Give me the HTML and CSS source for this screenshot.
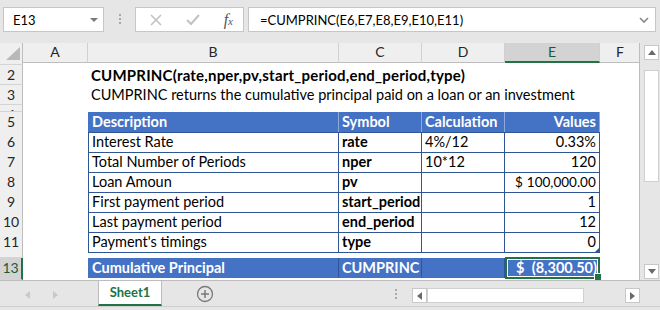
FILE: index.html
```html
<!DOCTYPE html>
<html lang="en">
<head>
  <meta charset="UTF-8" />
  <title>CUMPRINC - Sheet1</title>
  <link rel="stylesheet" href="styles.css">
</head>
<body>
  <div class="app">
    <div class="toolbar">
      <div class="namebox">
        <span>E13</span>
        <span class="nb-arrow"></span>
      </div>
      <div class="vdots"><i></i><i></i><i></i></div>
      <div class="fbuttons">
        <svg class="ico" width="14" height="14" viewBox="0 0 14 14"><path d="M2 2 L12 12 M12 2 L2 12" stroke="#c2c2c2" stroke-width="1.6" fill="none"/></svg>
        <svg class="ico" width="16" height="14" viewBox="0 0 16 14"><path d="M2 7 L6 11 L14 2" stroke="#c2c2c2" stroke-width="2" fill="none"/></svg>
        <span class="fx">f<small>x</small></span>
      </div>
      <div class="formula">
        <span>=CUMPRINC(E6,E7,E8,E9,E10,E11)</span>
        <svg width="10" height="8" viewBox="0 0 10 8"><path d="M1 2 L5 6 L9 2" stroke="#8a8a8a" stroke-width="1.6" fill="none"/></svg>
      </div>
    </div>

    <div class="main">
      <div class="sheet">
        <div class="row colhead">
          <div class="corner"><svg width="18" height="14" viewBox="0 0 18 14"><polygon points="17,0 17,13 3,13" fill="#b8b8b8"/></svg></div>
          <div class="ch">A</div><div class="ch">B</div><div class="ch">C</div><div class="ch">D</div><div class="ch sel">E</div><div class="ch">F</div>
        </div>
        <div class="row r1"><div class="rh"></div></div>
        <div class="row"><div class="rh">2</div><div></div><div class="c b title">CUMPRINC(rate,nper,pv,start_period,end_period,type)</div></div>
        <div class="row"><div class="rh">3</div><div></div><div class="c">CUMPRINC returns the cumulative principal paid on a loan or an investment</div></div>
        <div class="row r4"><div class="rh">4</div></div>
        <div class="row">
          <div class="rh">5</div><div></div>
          <div class="c th first">Description</div>
          <div class="c th">Symbol</div>
          <div class="c th">Calculation</div>
          <div class="c th num">Values</div>
        </div>
        <div class="row">
          <div class="rh">6</div><div></div>
          <div class="c tb first">Interest Rate</div>
          <div class="c tb b">rate</div>
          <div class="c tb">4%/12</div>
          <div class="c tb num">0.33%</div>
        </div>
        <div class="row">
          <div class="rh">7</div><div></div>
          <div class="c tb first">Total Number of Periods</div>
          <div class="c tb b">nper</div>
          <div class="c tb">10*12</div>
          <div class="c tb num">120</div>
        </div>
        <div class="row">
          <div class="rh">8</div><div></div>
          <div class="c tb first">Loan Amoun</div>
          <div class="c tb b">pv</div>
          <div class="c tb"></div>
          <div class="c tb acc loan"><span>$</span><span>100,000.00</span></div>
        </div>
        <div class="row">
          <div class="rh">9</div><div></div>
          <div class="c tb first">First payment period</div>
          <div class="c tb b">start_period</div>
          <div class="c tb"></div>
          <div class="c tb num">1</div>
        </div>
        <div class="row">
          <div class="rh">10</div><div></div>
          <div class="c tb first">Last payment period</div>
          <div class="c tb b">end_period</div>
          <div class="c tb"></div>
          <div class="c tb num">12</div>
        </div>
        <div class="row">
          <div class="rh">11</div><div></div>
          <div class="c tb first">Payment's timings</div>
          <div class="c tb b">type</div>
          <div class="c tb"></div>
          <div class="c tb num resize">0</div>
        </div>
        <div class="row r12"><div class="rh">12</div></div>
        <div class="row r13">
          <div class="rh sel">13</div><div></div>
          <div class="c tt first">Cumulative Principal</div>
          <div class="c tt">CUMPRINC</div>
          <div class="c tt"></div>
          <div class="c tt acc active"><span>$</span><span>(8,300.50)</span></div>
        </div>
      </div>
      <div class="vscroll">
        <div class="sbtn"><svg width="8" height="5" viewBox="0 0 8 5"><polygon points="0,5 8,5 4,0" fill="#6a6a6a"/></svg></div>
        <div class="vthumb"></div>
        <div class="vspace"></div>
        <div class="sbtn"><svg width="8" height="5" viewBox="0 0 8 5"><polygon points="0,0 8,0 4,5" fill="#6a6a6a"/></svg></div>
      </div>
    </div>

    <div class="tabs">
      <div class="nav">
        <svg width="6" height="8" viewBox="0 0 6 8"><polygon points="5,0 5,8 0,4" fill="#c8c8c8"/></svg>
        <svg width="6" height="8" viewBox="0 0 6 8"><polygon points="0,0 0,8 5,4" fill="#c8c8c8"/></svg>
      </div>
      <div class="tab">Sheet1</div>
      <svg class="plus" width="18" height="18" viewBox="0 0 18 18"><circle cx="9" cy="9" r="7.5" stroke="#7a7a7a" stroke-width="1.3" fill="none"/><path d="M9 5 V13 M5 9 H13" stroke="#7a7a7a" stroke-width="1.5"/></svg>
      <div class="hdots"><i></i><i></i><i></i></div>
      <div class="hscroll">
        <div class="sbtn"><svg width="5" height="8" viewBox="0 0 5 8"><polygon points="5,0 5,8 0,4" fill="#6a6a6a"/></svg></div>
        <div class="hthumb"></div>
        <div class="hspace"></div>
        <div class="sbtn"><svg width="5" height="8" viewBox="0 0 5 8"><polygon points="0,0 0,8 5,4" fill="#6a6a6a"/></svg></div>
      </div>
    </div>
  </div>
</body>
</html>
```

FILE: styles.css
```css
:root {
  --chrome: #e6e6e6;
  --header: #efefef;
  --line: #c6c6c6;
  --blue: #4472c4;
  --blue-dark: #2f5597;
  --green: #217346;
}
* { box-sizing: border-box; }
body {
  margin: 0;
  font-family: Lato, "Liberation Sans", sans-serif;
  font-size: 14.5px;
  color: #000;
  background: var(--chrome);
}
.app {
  width: 660px;
  height: 310px;
  overflow: hidden;
  display: flex;
  flex-direction: column;
}

/* formula bar */
.toolbar {
  height: 43px;
  flex: none;
  display: flex;
  align-items: flex-start;
  padding: 7px 4px 0 3px;
  font-size: 13px;
}
.namebox, .fbuttons, .formula {
  height: 25px;
  background: #fff;
  border: 1px solid var(--line);
  display: flex;
  align-items: center;
}
.namebox {
  width: 101px;
  padding: 0 5px 0 9px;
  justify-content: space-between;
}
.nb-arrow {
  border-left: 4px solid transparent;
  border-right: 4px solid transparent;
  border-top: 4px solid #7a7a7a;
}
.vdots {
  width: 31px;
  display: flex;
  flex-direction: column;
  align-items: center;
  gap: 2px;
  padding-top: 7px;
}
.vdots i, .hdots i {
  display: block;
  width: 2px;
  height: 2px;
  background: #a8a8a8;
}
.fbuttons {
  width: 109px;
  padding: 0 10px 0 13px;
  justify-content: space-between;
}
.fx {
  font-family: "Liberation Serif", serif;
  font-style: italic;
  font-size: 16px;
  color: #555;
}
.fx small { font-size: 11px; }
.formula {
  margin-left: 4px;
  flex: 1;
  padding: 0 6px 0 11px;
  justify-content: space-between;
}

/* grid */
.main {
  height: 237px;
  flex: none;
  display: flex;
}
.sheet {
  width: 640px;
  background: #fff;
  border-right: 1px solid #bdbdbd;
  overflow: hidden;
}
.row {
  display: grid;
  grid-template-columns: 23px 65px 251px 83px 83px 95px 40px;
  height: 20px;
}
.colhead { height: 19px; background: var(--header); }
.r1 { height: 3px; }
.r4 { height: 7px; }
.r12 { height: 6px; }
.r13 { height: 22px; }
.ch {
  text-align: center;
  font-size: 14px;
  line-height: 18px;
  color: #262626;
  border-right: 1px solid #d0d0d0;
  border-bottom: 1px solid #bdbdbd;
}
.ch:last-child { border-right: none; }
.ch.sel {
  background: #d3d3d3;
  color: #1c5a36;
  border-bottom: 2px solid var(--green);
}
.corner {
  display: flex;
  align-items: flex-end;
  justify-content: flex-end;
  padding: 0 1px 1px 0;
  border-right: 1px solid #bdbdbd;
  border-bottom: 1px solid #bdbdbd;
}
.rh {
  background: var(--header);
  text-align: center;
  font-size: 14px;
  line-height: 20px;
  color: #262626;
  overflow: hidden;
  border-right: 1px solid #bdbdbd;
  border-bottom: 1px solid #d4d4d4;
}
.rh.sel {
  background: #d3d3d3;
  color: #1c5a36;
  border-right: 2px solid var(--green);
}
.c {
  padding: 0 3px;
  line-height: 20px;
  white-space: nowrap;
}
.b { font-weight: bold; }
.title { font-size: 15px; letter-spacing: 0.2px; }
.num { text-align: right; }
.acc {
  display: flex;
  justify-content: space-between;
  padding: 0 7px 0 10px;
}
.loan {
  justify-content: flex-start;
  gap: 4px;
  padding: 0 0 0 10px;
  font-size: 13.5px;
}
.th {
  background: var(--blue);
  color: #fff;
  font-weight: bold;
  border-right: 1px solid #8eaadb;
  border-bottom: 1px solid var(--blue-dark);
}
.tb {
  border-right: 1px solid var(--blue-dark);
  border-bottom: 1px solid var(--blue-dark);
}
.first { border-left: 1px solid var(--blue-dark); }
.th.first { border-left-color: var(--blue); }
.tt {
  height: 20px;
  background: var(--blue);
  color: #fff;
  font-weight: bold;
  border-right: 1px solid var(--blue-dark);
}
.tt.first { border-left: 1px solid var(--blue); }
.resize { position: relative; }
.resize::after {
  content: "";
  position: absolute;
  right: 0;
  bottom: 0;
  border-left: 4px solid transparent;
  border-bottom: 4px solid var(--blue-dark);
}
.active {
  position: relative;
  height: 22px;
  margin-top: -1px;
  padding: 0 1px 0 9px;
  line-height: 18px;
  border: 2px solid var(--green);
  box-shadow: inset 0 0 0 1px #fff;
}
.active::after {
  content: "";
  position: absolute;
  right: -4px;
  bottom: -4px;
  width: 6px;
  height: 6px;
  background: var(--green);
  border: 1px solid #fff;
}

/* scrollbars */
.vscroll {
  width: 20px;
  display: flex;
  flex-direction: column;
  align-items: center;
  padding: 2px 0 1px 3px;
}
.sbtn {
  width: 15px;
  height: 15px;
  flex: none;
  background: #fff;
  border: 1px solid #c8c8c8;
  display: flex;
  align-items: center;
  justify-content: center;
}
.vthumb {
  width: 15px;
  height: 112px;
  margin-top: 10px;
  background: #fff;
  border: 1px solid #d0d0d0;
}
.vspace, .hspace { flex: 1; }

/* sheet tabs */
.tabs {
  flex: 1;
  display: flex;
  align-items: flex-start;
  border-top: 1px solid #bdbdbd;
  border-bottom: 1px solid #cfcfcf;
  margin-bottom: 3px;
}
.nav {
  width: 98px;
  display: flex;
  gap: 22px;
  padding: 10px 0 0 25px;
}
.tab {
  width: 64px;
  height: 25px;
  background: #fff;
  border-left: 1px solid #bdbdbd;
  border-right: 1px solid #bdbdbd;
  border-bottom: 2px solid var(--green);
  color: var(--green);
  font-size: 13px;
  font-weight: bold;
  text-align: center;
  line-height: 23px;
}
.plus { margin: 4px 0 0 34px; }
.hdots {
  display: flex;
  flex-direction: column;
  gap: 2px;
  margin: 8px 0 0 181px;
}
.hscroll {
  margin: 7px 0 0 15px;
  width: 228px;
  height: 15px;
  display: flex;
}
.hthumb {
  width: 157px;
  background: #fff;
  border: 1px solid #d0d0d0;
}
```
